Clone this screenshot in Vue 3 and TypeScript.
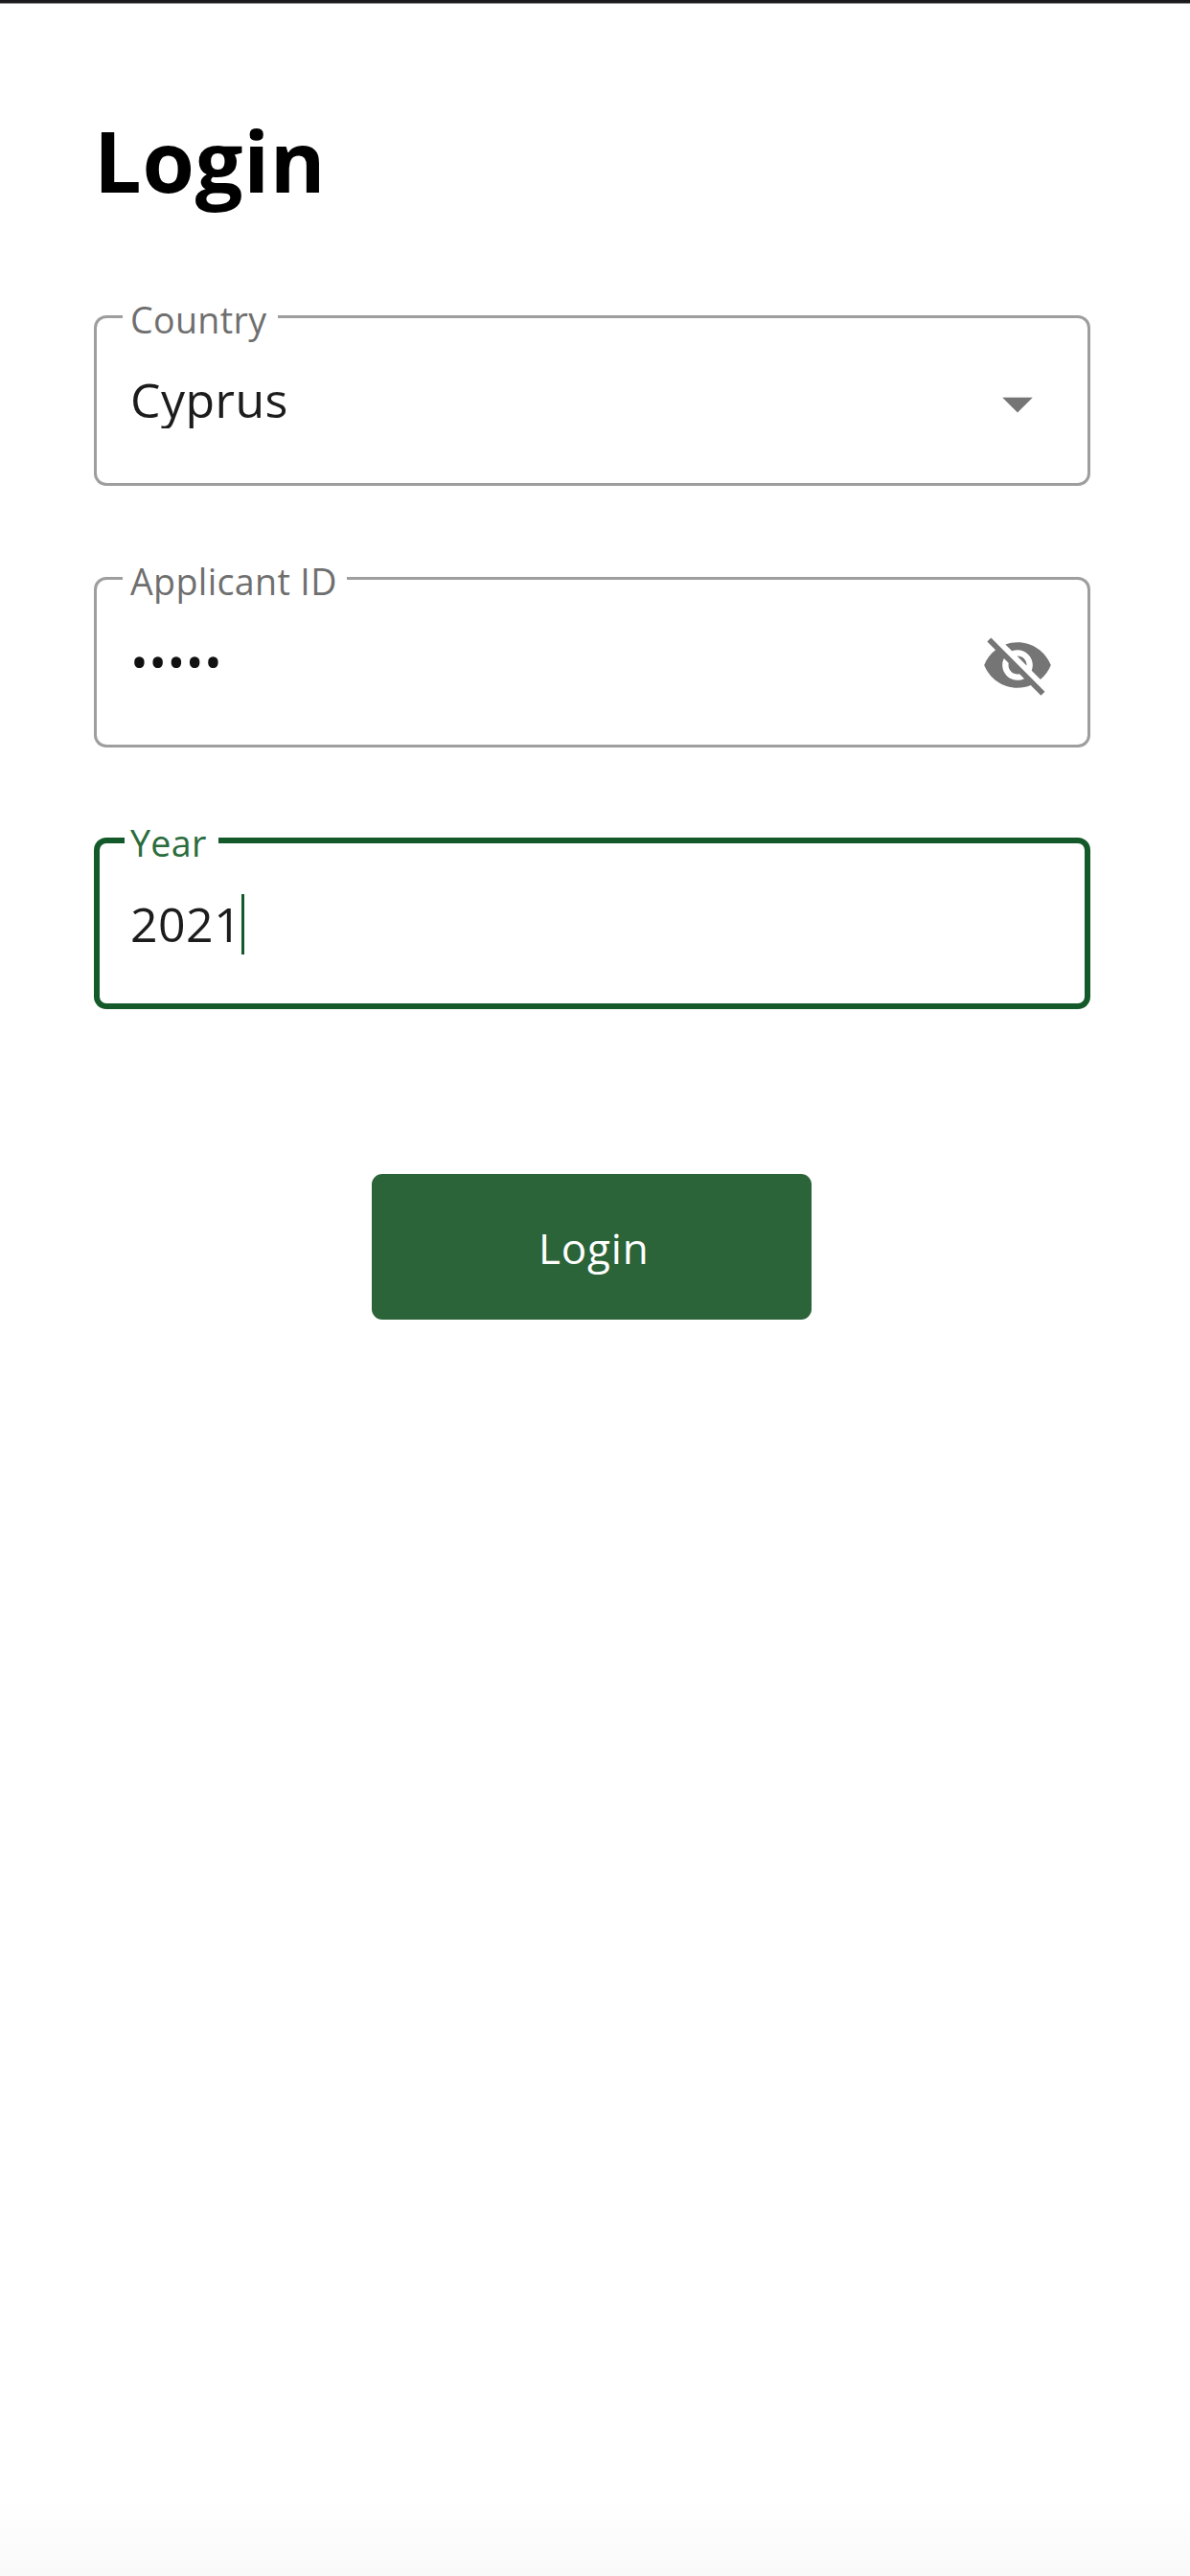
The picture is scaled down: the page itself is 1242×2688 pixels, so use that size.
<script setup lang="ts">
interface Field {
  id: string
  label: string
  value: string
  icon?: string
  kind: 'select' | 'secret' | 'text'
  focused?: boolean
}

const fields: Field[] = [
  { id: 'country', label: 'Country', value: 'Cyprus', kind: 'select', icon: 'M7 10l5 5 5-5z' },
  {
    id: 'applicant',
    label: 'Applicant ID',
    value: '•••••',
    kind: 'secret',
    icon: 'M12 7c2.76 0 5 2.24 5 5 0 .65-.13 1.26-.36 1.83l2.92 2.92c1.51-1.26 2.7-2.89 3.43-4.75-1.73-4.39-6-7.5-11-7.5-1.4 0-2.74.25-3.98.7l2.16 2.16C10.74 7.13 11.35 7 12 7zM2 4.27l2.28 2.28.46.46C3.08 8.3 1.78 10.02 1 12c1.73 4.39 6 7.5 11 7.5 1.55 0 3.03-.3 4.38-.84l.42.42L19.73 22 21 20.73 3.27 3 2 4.27zM7.53 9.8l1.55 1.55c-.05.21-.08.43-.08.65 0 1.66 1.34 3 3 3 .22 0 .44-.03.65-.08l1.55 1.55c-.67.33-1.41.53-2.2.53-2.76 0-5-2.24-5-5 0-.79.2-1.53.53-2.2zm4.31-.78l3.15 3.15.02-.16c0-1.66-1.34-3-3-3l-.17.01z',
  },
  { id: 'year', label: 'Year', value: '2021', kind: 'text', focused: true },
]
</script>

<template>
  <main class="page">
    <div class="status-edge"></div>
    <h1 class="title">Login</h1>
    <form class="form" @submit.prevent>
      <div v-for="f in fields" :key="f.id" class="field" :class="[f.kind, f.id, { focused: f.focused }]">
        <div class="outline">
          <span class="lead"></span>
          <span class="notch"><label class="label">{{ f.label }}</label></span>
          <span class="trail"></span>
        </div>
        <div class="content">
          <span class="value">{{ f.value }}</span>
          <span v-if="f.focused" class="caret"></span>
          <svg v-if="f.icon" class="icon" viewBox="0 0 24 24"><path :d="f.icon" /></svg>
        </div>
      </div>
      <button class="submit" type="submit">Login</button>
    </form>
    <div class="bottom-shade"></div>
  </main>
</template>

<style>
html,
body {
  margin: 0;
  background: #fff;
}
</style>

<style scoped>
.page {
  box-sizing: border-box;
  width: 1242px;
  height: 2688px;
  display: flex;
  flex-direction: column;
  background: #fff;
  font-family: 'Open Sans', sans-serif;
  color: #000;
  overflow: hidden;
}
.status-edge {
  height: 3px;
  flex: none;
  background: #1b1b1d;
  border-bottom: 1px solid #8a8a8a;
}
.title {
  margin: 103px 0 0 98px;
  font-size: 88px;
  line-height: 120px;
  font-weight: 700;
  letter-spacing: 0.75px;
}
.form {
  display: flex;
  flex-direction: column;
  margin: 101.5px 104.5px 0 98px;
}
.field {
  display: grid;
  height: 178.2px;
  margin-bottom: 95px;
  --line: #9e9e9e;
  --w: 3px;
}
.focused {
  --line: #13592a;
  --w: 6px;
}
.outline,
.content {
  grid-area: 1 / 1;
  min-width: 0;
}
.outline {
  display: flex;
}
.focused .outline {
  margin-top: -1px;
}
.lead,
.notch,
.trail {
  box-sizing: border-box;
  border: 0 solid var(--line);
  border-bottom-width: var(--w);
}
.lead {
  width: 29.5px;
  border-top-width: var(--w);
  border-left-width: var(--w);
  border-radius: 13px 0 0 13px;
}
.focused .lead {
  width: 31.5px;
}
.trail {
  flex: 1;
  border-top-width: var(--w);
  border-right-width: var(--w);
  border-radius: 0 13px 13px 0;
}
.notch {
  width: 162px;
  padding-left: 8.5px;
}
.applicant .notch {
  width: 234.5px;
}
.year .notch {
  width: 98.5px;
  padding-left: 6.5px;
}
.label {
  display: block;
  margin-top: -20.5px;
  font-size: 37.6px;
  line-height: 52px;
  letter-spacing: 0.35px;
  white-space: nowrap;
  color: #6f6f6f;
}
.focused .label {
  margin-top: -19.5px;
  color: #2a6c3c;
}
.content {
  display: flex;
  align-items: flex-start;
  padding: 54px 38px 0;
}
.value {
  margin-top: 4px;
  font-size: 50px;
  line-height: 60px;
  letter-spacing: 0.47px;
  color: #1c1c1c;
}
.year .value {
  margin-top: 5px;
}
.secret .value {
  color: #111;
}
.select .value {
  overflow: hidden;
}
.caret {
  width: 3px;
  height: 63px;
  margin-top: 4px;
  background: #13592a;
}
.icon {
  width: 76px;
  height: 76px;
  margin-left: auto;
  fill: #757575;
}
.submit {
  align-self: center;
  width: 459px;
  height: 152px;
  margin-top: 77px;
  padding: 1px 0 0 4px;
  border: 0;
  border-radius: 11px;
  background: #2a6438;
  color: #fff;
  font-family: inherit;
  font-size: 44px;
  line-height: 60px;
  letter-spacing: 0.8px;
}
.bottom-shade {
  height: 80px;
  flex: none;
  margin-top: auto;
  background: linear-gradient(#fff, #f9f9f9);
}
</style>
